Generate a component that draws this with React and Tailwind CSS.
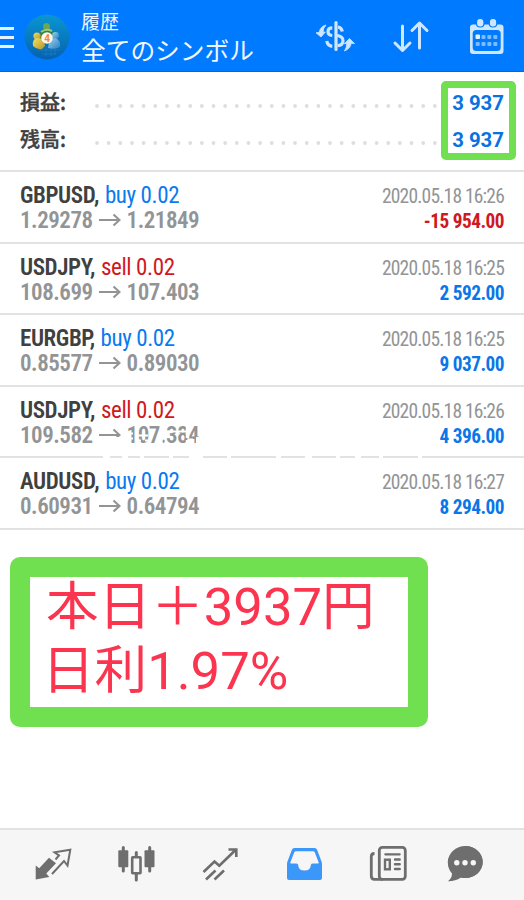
import React from "react";

const trades = [
  { symbol: "GBPUSD", side: "buy", open: "1.29278", close: "1.21849", time: "2020.05.18 16:26", profit: "-15 954.00" },
  { symbol: "USDJPY", side: "sell", open: "108.699", close: "107.403", time: "2020.05.18 16:25", profit: "2 592.00" },
  { symbol: "EURGBP", side: "buy", open: "0.85577", close: "0.89030", time: "2020.05.18 16:25", profit: "9 037.00" },
  { symbol: "USDJPY", side: "sell", open: "109.582", close: "107.384", time: "2020.05.18 16:26", profit: "4 396.00", worn: true },
  { symbol: "AUDUSD", side: "buy", open: "0.60931", close: "0.64794", time: "2020.05.18 16:27", profit: "8 294.00" },
];

function Logo() {
  return (
    <svg className="ml-[10px] h-[46px] w-[46px] shrink-0" viewBox="0 0 46 46">
      <defs>
        <linearGradient id="disc" x1="0" y1="0" x2="0" y2="1">
          <stop offset="0" stopColor="#0b96d2" />
          <stop offset="1" stopColor="#0562b0" />
        </linearGradient>
        <linearGradient id="gold" x1="0" y1="0" x2="1" y2="1">
          <stop offset="0" stopColor="#f0e068" />
          <stop offset="1" stopColor="#b8962a" />
        </linearGradient>
        <linearGradient id="sky" x1="0" y1="0" x2="1" y2="1">
          <stop offset="0" stopColor="#9ad4f2" />
          <stop offset="1" stopColor="#2c7fc0" />
        </linearGradient>
      </defs>
      <circle cx="23" cy="23" r="22.500" fill="url(#disc)" />
      <path d="M14 36h22M18 40h14M27 30v12M31 30v11M22 32v10" stroke="#2582bd" strokeWidth=".6" />
      <path d="M15 24q-1-8 5-9h5q7 2 5 10l-4 4h-8z" fill="#2f8050" />
      <circle cx="22.500" cy="12.500" r="3.500" fill="#6aa658" />
      <path d="M17 18q5-4 11-1" stroke="#9cc878" strokeWidth="2" fill="none" />
      <circle cx="13" cy="22" r="3.600" fill="url(#gold)" />
      <path d="M9 32q-1-8 5-8t7 8l-3 3q-5 1-9-3z" fill="url(#gold)" />
      <circle cx="31.500" cy="21.500" r="3.400" fill="url(#sky)" />
      <path d="M24 34q1-10 7-10 6 2 5 9-5 3-12 1z" fill="url(#sky)" />
      <circle cx="23" cy="24" r="5.800" fill="#fff6e8" />
      <text x="23" y="27.800" textAnchor="middle" fontFamily="Roboto, sans-serif" fontWeight="700" fontSize="10" fill="#ec8a3c">4</text>
    </svg>
  );
}

function DollarIcon() {
  return (
    <svg className="h-10 w-10" viewBox="0 0 40 40" fill="none" stroke="#cfe6ff" strokeWidth="3.200">
      <path d="M20 6.500v27" strokeLinecap="round" />
      <path d="M16.300 11.800q-4.300 0-4.300 3.700t4.300 4M22 11q3.500.500 4.300 4.500M21 19.500q6 .700 6 5.200t-5.500 5M10.800 25q.700 4.800 5.500 5.300" />
      <path d="M10 9Q4.300 10.500 3.200 16.300L0 16.800l5 4.200 4.300-5-2.300.200Q7 12 10 9zM28.500 35q6-2.500 6.700-7.700l3.300.300L33.500 22.500l-5.200 5.200 2.400 0Q31 31 28.500 35z" fill="#cfe6ff" stroke="#cfe6ff" strokeWidth=".800" />
    </svg>
  );
}

function SortIcon() {
  return (
    <svg className="h-10 w-10" viewBox="0 0 40 40" fill="none" stroke="#cfe6ff" strokeWidth="3" strokeLinecap="round" strokeLinejoin="round">
      <path d="M10.500 10v24M3 27l7.500 7.500 7.500-7.500M27.500 32V7.500M20 14.500L27.500 7l7.500 7.500" />
    </svg>
  );
}

function CalendarIcon() {
  return (
    <svg className="h-10 w-10" viewBox="0 0 40 40">
      <rect x="4" y="8.500" width="33.500" height="29.500" rx="3" fill="#cfe6ff" />
      <rect x="6.700" y="14" width="28" height="21" rx="3.500" fill="#007aff" />
      <rect x="10.500" y="2.500" width="7.500" height="8.500" rx="3.500" fill="#cfe6ff" stroke="#007aff" strokeWidth="1.200" />
      <rect x="23.300" y="2.500" width="7.500" height="8.500" rx="3.500" fill="#cfe6ff" stroke="#007aff" strokeWidth="1.200" />
      <g fill="#7bbcff">
        <rect x="9.500" y="18.500" width="4.500" height="4.500" rx="1" fill="#e4f2ff" />
        {[15.500, 21.300, 27.300].map((x) => <rect key={x} x={x} y="19" width="4" height="4" rx="1" />)}
        {[9.700, 15.500, 21.300, 27.300].map((x) => <rect key={x} x={x} y="26" width="4" height="4" rx="1" />)}
      </g>
    </svg>
  );
}

function Header() {
  return (
    <header className="flex h-[72px] shrink-0 items-start border-b border-[#0668d2] bg-[#007aff] text-[#f0f7ff]">
      <div className="mt-[27px] flex w-[14px] shrink-0 flex-col gap-[6px]">
        <i className="h-[3px] bg-[#e6f3ff]" />
        <i className="h-[3px] bg-[#e6f3ff]" />
        <i className="h-[3px] bg-[#e6f3ff]" />
      </div>
      <div className="mt-[14px]"><Logo /></div>
      <div className="ml-[11px] mt-[11px] w-[220px] whitespace-nowrap font-['Noto_Sans_CJK_JP',sans-serif]">
        <div className="text-[19px] leading-[20px]">履歴</div>
        <div className="mt-[1px] text-[24.700px] leading-[34px]">全てのシンボル</div>
      </div>
      <div className="ml-[15px] mt-[16px] flex gap-[36px]">
        <DollarIcon /><SortIcon /><div className="-ml-[2px]"><CalendarIcon /></div>
      </div>
    </header>
  );
}

function Dots() {
  return (
    <svg className="ml-[27px] mt-[8px] h-[4px] w-[345px]" viewBox="0 0 345 4">
      <path d="M2 2H345" stroke="#dedede" strokeWidth="3.800" strokeLinecap="round" strokeDasharray="0 11.650" />
    </svg>
  );
}

function Summary() {
  return (
    <section className="relative h-[100px] shrink-0 border-b-2 border-[#e2e2e2] pl-[20px] pt-[12px]">
      {["損益:", "残高:"].map((label) => (
        <div key={label} className="flex h-[36.500px] items-center">
          <span className="w-[48px] whitespace-nowrap font-['Noto_Sans_CJK_JP',sans-serif] text-[20px] font-medium leading-[36px] text-[#404040] [-webkit-text-stroke:0.4px_#404040]">{label}</span>
          <Dots />
        </div>
      ))}
      <div className="absolute left-[441px] top-[9px] flex h-[79px] w-[75px] flex-col items-end rounded-[5px] border-[7px] border-[#70df50] bg-white pr-[5px] font-['Roboto',sans-serif] text-[20.400px] font-bold leading-[36.500px] text-[#0a72e0]">
        <span className="-mt-[3px] whitespace-nowrap">3 937</span>
        <span className="whitespace-nowrap">3 937</span>
      </div>
    </section>
  );
}

/* White scratches across the closing price and the divider below it. */
function Scratches() {
  return (
    <svg className="absolute left-0 top-0 h-[72px] w-[524px]" viewBox="0 0 524 72" fill="none" stroke="#fff" strokeWidth="2">
      <path d="M111 52h12" strokeWidth="4" />
      <path d="M127 46.500h6M127 51.500h6M137 48.500h11M137 53.500h4M145 53.500h3M164 44.500h24" />
      <path d="M187.500 39v12M187.500 53v5M161 52v7" strokeWidth="3.400" />
      <path d="M189 53h4M197.500 50v6" strokeWidth="3" />
      <path d="M103 70.500h7M122 70.500h6M140 70.500h4M169 70.500h4M189 70.500h14M227 70.500h4M276 70.500h5M305 70.500h7M336 70.500h4M355 70.500h6M379 70.500h4M418 70.500h4" strokeWidth="3" />
    </svg>
  );
}

function Trade({ trade }) {
  const tone = trade.side === "buy" ? "text-[#0a7af0]" : "text-[#d01820]";
  const profitTone = trade.profit[0] === "-" ? "text-[#d01820]" : "text-[#0a76e8]";
  return (
    <div className="relative flex h-[71.500px] shrink-0 justify-between border-b-2 border-[#e2e2e2] pl-[20px] pr-[20px] pt-[11px] font-['Roboto_Condensed','Roboto',sans-serif] [font-stretch:75%]">
      <div>
        <div className="whitespace-nowrap text-[23px] leading-[26px] tracking-[-0.400px]">
          <span className="font-semibold text-[#404040]">{trade.symbol},</span> <span className={"ml-[1px] " + tone}>{trade.side} 0.02</span>
        </div>
        <div className="flex items-center text-[23px] font-semibold leading-[24px] tracking-[-0.480px] text-[#929496]">
          {trade.open}
          <svg className="ml-[6px] mr-[6px] h-[16px] w-[22px]" viewBox="0 0 22 16" fill="none" stroke="#929496" strokeWidth="2.200"><path d="M0 7h20.500M14.500 1.500L20.500 7l-6 5.500" /></svg>
          {trade.close}
        </div>
      </div>
      <div className="whitespace-nowrap text-right">
        <div className="text-[19.500px] leading-[27px] tracking-[-0.800px]">
          <span className="text-[#929496]">{trade.time}</span>
        </div>
        <div className={"pt-px text-[19.300px] font-bold leading-[22px] tracking-[-0.500px] " + profitTone}>
          <span>{trade.profit}</span>
        </div>
      </div>
      {trade.worn && <Scratches />}
    </div>
  );
}

function TabBar() {
  return (
    <nav className="flex h-[72px] shrink-0 items-start border-t-2 border-[#e2e2e2] bg-[#f6f6f6] pl-[33px] pt-[14px]">
      <svg className="mr-[44px] h-10 w-10" viewBox="0 0 40 40">
        <path d="M2.700 35.500V21.500l3.500 2.700L16 13.700l7 5.600L13.300 29.500l3 3.500z" fill="#6e6e6e" />
        <path d="M22.500 15.500l3.500-4-4.500-3.200 15.800-2.500-2.800 15.700L31 17 19 30" fill="none" stroke="#6e6e6e" strokeWidth="2" />
      </svg>
      <svg className="mr-[43px] h-10 w-10" viewBox="0 0 40 40" fill="#6e6e6e" stroke="#6e6e6e">
        <path d="M6.300 3.500v23.500M32.700 3.500v23.500M19.300 8.500V13M19.300 30v6" strokeWidth="3" strokeLinecap="round" />
        <rect x="1.300" y="6.300" width="10" height="17" rx="1" stroke="none" />
        <rect x="27.500" y="6.300" width="10" height="17" rx="1" stroke="none" />
        <rect x="15.200" y="13.200" width="8.300" height="16" rx=".5" fill="#f6f6f6" strokeWidth="2.600" />
      </svg>
      <svg className="mr-[45px] h-10 w-10" viewBox="0 0 40 40" fill="none" stroke="#6e6e6e" strokeWidth="2.600">
        <path d="M3.500 28L14.500 17.500l4.800 4.300L35.500 6M28.500 5.500h7.800V13M6 35.500l9.500-9M14.500 35.500l9.500-9" />
      </svg>
      <svg className="mr-[43px] h-10 w-10" viewBox="0 0 40 40" fillRule="evenodd">
        <path d="M9.500 4h20q2 0 2.700 2l4.500 12q.300 1 .3 2v14q0 2-2 2H4q-2 0-2-2V20q0-1 .3-2L6.800 6q.700-2 2.700-2zM11 7.300q-1.300 0-1.700 1L5.300 18.500q-.300 1 .7 1h5.500q1.500 0 1.700 1.500 0 5.500 6.300 5.500t6.300-5.500q.200-1.500 1.700-1.500H33q1 0 .7-1L29.700 8.300q-.400-1-1.700-1z" fill="#3c97fb" />
      </svg>
      <svg className="mr-[38px] h-10 w-10" viewBox="0 0 40 40" fill="none" stroke="#6e6e6e" strokeWidth="2.800" strokeLinecap="round">
        <rect x="11.300" y="3.300" width="26" height="32" rx="3" />
        <path d="M6.500 9.500Q3.300 9.500 3.300 12.500v19.500q0 3.300 3.300 3.300H15" strokeLinecap="butt" />
        <path d="M17.300 10.300h14.400" strokeWidth="2.200" />
        <rect x="17" y="15.700" width="4.800" height="9.600" strokeWidth="2.400" />
        <path d="M27 15.500h4.700M27 20.300h4.700M27 25h4.700" strokeWidth="2.400" />
      </svg>
      <svg className="h-10 w-10" viewBox="0 0 40 40">
        <path d="M19.300 2C29 2 36.700 9 36.700 18S29 34 19.300 34q-2.300 0-4.300-.5Q9 37.500 2 37.300 6 34 6 29.500 1.800 25 1.800 18 2 9 19.300 2z" fill="#6e6e6e" />
        <ellipse cx="19.300" cy="18" rx="17.400" ry="16" fill="#6e6e6e" />
        <g fill="#f6f6f6"><circle cx="10.800" cy="18.700" r="2.700" /><circle cx="19" cy="18.700" r="2.700" /><circle cx="27.300" cy="18.700" r="2.700" /></g>
      </svg>
    </nav>
  );
}

export default function App() {
  return (
    <div className="flex h-[900px] w-[524px] flex-col overflow-hidden bg-white">
      <Header />
      <Summary />
      {trades.map((t) => <Trade key={t.symbol + t.open} trade={t} />)}
      <div className="ml-[10px] mt-[27px] h-[170px] w-[418px] shrink-0 whitespace-nowrap rounded-[10px] border-[20px] border-[#70df50] bg-white pl-[16px] font-['Roboto','Noto_Sans_CJK_JP',sans-serif] text-[52.600px] leading-[64px] text-[#fb344f]">
        <div className="-mt-[2px]">本日＋3937円</div>
        <div className="-ml-[4px]">日利1.97%</div>
      </div>
      <div className="flex-1" />
      <TabBar />
    </div>
  );
}
